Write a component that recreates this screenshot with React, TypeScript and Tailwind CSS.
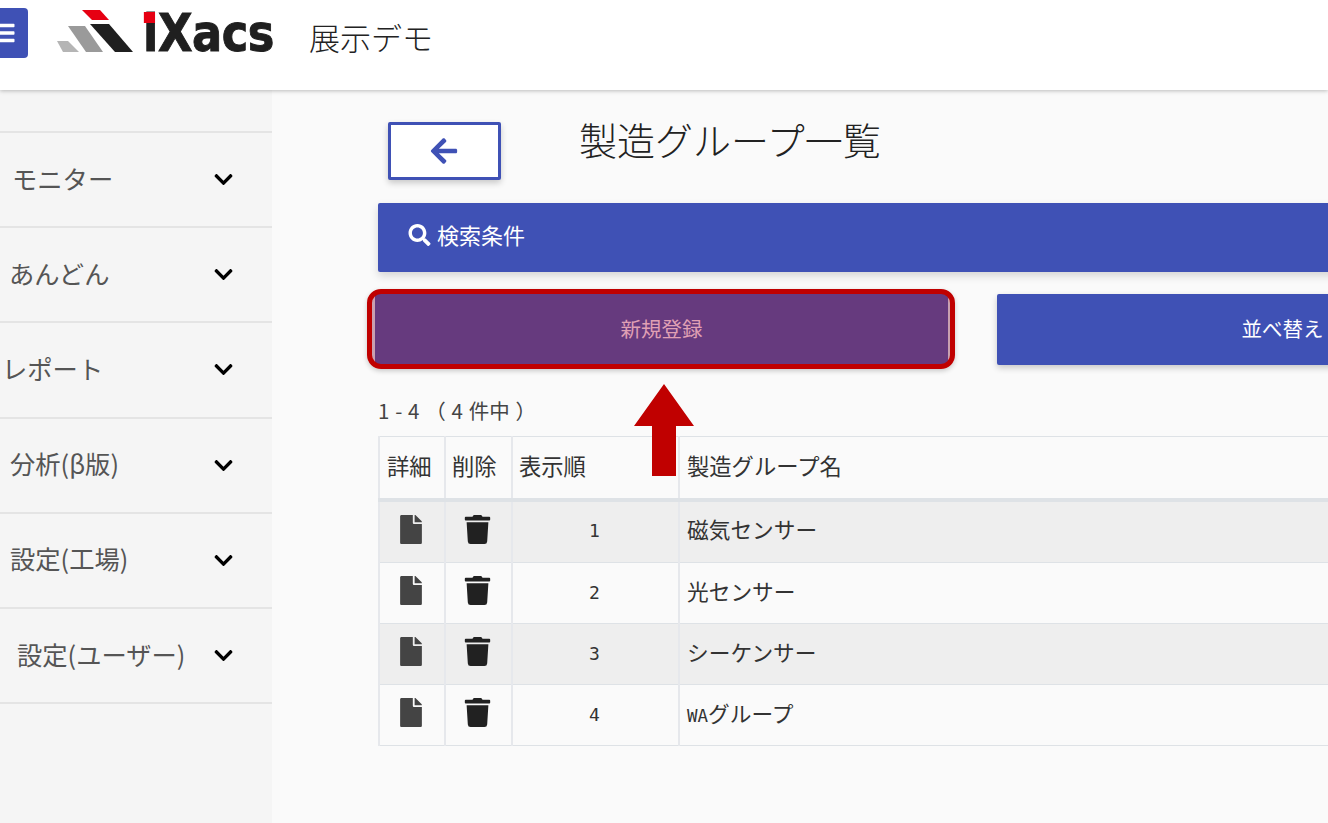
import { FaArrowLeft, FaBars, FaChevronDown, FaFile, FaSearch, FaTrash } from 'react-icons/fa';

const fontStack = { fontFamily: '"Noto Sans CJK JP", "Noto Sans", sans-serif' };

const menuItems = [
    { label: 'モニター', pad: 'pl-[12px]' },
    { label: 'あんどん', pad: 'pl-[9px]' },
    { label: 'レポート', pad: 'pl-[2px]' },
    { label: '分析(β版)', pad: 'pl-[10px]' },
    { label: '設定(工場)', pad: 'pl-[10px]' },
    { label: '設定(ユーザー)', pad: 'pl-[17px]' },
];

const rows = [
    { order: 1, prefix: '', name: '磁気センサー' },
    { order: 2, prefix: '', name: '光センサー' },
    { order: 3, prefix: '', name: 'シーケンサー' },
    { order: 4, prefix: 'WA', name: 'グループ' },
];

function Logo() {
    return (
        <div className="flex items-center">
            <svg width="78" height="44" viewBox="0 0 78 44">
                <polygon points="25,1 43,1 52,11 35,11" fill="#e60012" />
                <polygon points="33,15 52,15 76,43 58,43" fill="#1f1f1f" />
                <polygon points="11,17 28,17 46,43 29,43" fill="#9a9a9a" />
                <polygon points="0,32 11,32 22,43 6,43" fill="#b5b5b5" />
            </svg>
            <div className="relative ml-[8px] w-[130px] origin-left translate-y-[2px] scale-x-[0.86] text-[52px] leading-none font-bold tracking-[-0.5px] text-[#1f1f1f] [-webkit-text-stroke:1px_#1f1f1f] [font-family:'DejaVu_Sans',sans-serif]">
                iXacs
                <span className="absolute left-[1px] top-[5px] h-[11px] w-[13px] bg-[#e60012]" />
            </div>
        </div>
    );
}

function SideMenu() {
    return (
        <aside className="w-[272px] shrink-0 bg-[#f5f5f5] pt-[41px]">
            <div className="border-t-2 border-[#e4e4e4]">
                {menuItems.map((item) => (
                    <div
                        key={item.label}
                        className={`flex h-[95.2px] items-center justify-between border-b-2 border-[#e4e4e4] pr-[38px] ${item.pad}`}
                    >
                        <span className="pb-[2px] text-[25.3px] text-[#555]">{item.label}</span>
                        <FaChevronDown className="h-[21px] w-[21px] text-black" />
                    </div>
                ))}
            </div>
        </aside>
    );
}

function GroupTable() {
    return (
        <table className="w-[1000px] table-fixed border-collapse border border-[#dee2e6] text-[21.7px] text-[#333]">
            <colgroup>
                <col className="w-[66px]" />
                <col className="w-[67px]" />
                <col className="w-[167px]" />
                <col />
            </colgroup>
            <thead>
                <tr className="h-[63px] border-b-[4px] border-[#dee2e6] text-[22.3px]">
                    <th className="border-x-2 border-[#e6e8ec] px-[7px] pb-[3px] text-left font-normal">詳細</th>
                    <th className="border-x-2 border-[#e6e8ec] px-[6px] pb-[3px] text-left font-normal">削除</th>
                    <th className="border-x-2 border-[#e6e8ec] px-[6px] pb-[3px] text-left font-normal">表示順</th>
                    <th className="border-x-2 border-[#e6e8ec] px-[7px] pb-[3px] text-left font-normal">製造グループ名</th>
                </tr>
            </thead>
            <tbody>
                {rows.map((row, index) => (
                    <tr
                        key={row.order}
                        className={`border-b border-[#dee2e6] ${index === 0 ? 'h-[63px]' : 'h-[61px]'} ${index % 2 === 0 ? 'bg-[#eeeeee]' : 'bg-[#fafafa]'}`}
                    >
                        <td className="border-x-2 border-[#e6e8ec] pb-[5px] pr-[2px]">
                            <FaFile className="mx-auto h-[29px] w-[24px] text-[#444]" />
                        </td>
                        <td className="border-x-2 border-[#e6e8ec] pb-[5px] pr-[2px]">
                            <FaTrash className="mx-auto h-[29px] w-[27px] text-[#212121]" />
                        </td>
                        <td className="border-x-2 border-[#e6e8ec] pb-[2px] pr-[2px] text-center text-[18px] [font-family:'DejaVu_Sans_Mono',monospace]">{row.order}</td>
                        <td className="border-x-2 border-[#e6e8ec] px-[7px] pb-[4px]">
                            {row.prefix && <span className="text-[17.5px] [font-family:'DejaVu_Sans_Mono',monospace]">{row.prefix}</span>}
                            {row.name}
                        </td>
                    </tr>
                ))}
            </tbody>
        </table>
    );
}

export default function App() {
    return (
        <div className="h-[823px] w-[1328px] overflow-hidden bg-[#fafafa]" style={fontStack}>
            <header className="relative z-10 flex h-[90px] items-center bg-white shadow-[0_1px_4px_rgba(0,0,0,0.25)]">
                <div className="-ml-[20px] mb-[24px] flex h-[50px] w-[48px] shrink-0 items-center justify-center rounded-[4px] bg-[#3f51b5]">
                    <FaBars className="h-[24px] w-[24px] text-white" />
                </div>
                <div className="mb-[28px] ml-[29px]">
                    <Logo />
                </div>
                <span className="mb-[16px] ml-[36px] text-[31px] font-light text-[#222]">展示デモ</span>
            </header>

            <div className="flex h-[733px]">
                <SideMenu />
                <main className="relative min-w-0 flex-1 pl-[106px]">
                    <div className="flex pt-[32px]">
                        <button className="ml-[10px] flex h-[58px] w-[113px] items-center justify-center rounded-[2px] border-[3px] border-[#3f51b5] bg-white shadow-[0_3px_6px_rgba(0,0,0,0.2)]">
                            <FaArrowLeft className="-ml-[2px] h-[30px] w-[30px] text-[#3f51b5]" />
                        </button>
                        <h1 className="ml-[78px] -mt-[5px] text-[38px] leading-[44px] font-light text-[#222]">製造グループ一覧</h1>
                    </div>

                    <div className="mt-[23px] flex h-[69px] w-[1000px] items-center rounded-[2px] bg-[#3f51b5] pb-[6px] pl-[30px] text-[22px] text-white shadow-[0_4px_8px_rgba(0,0,0,0.15)]">
                        <FaSearch className="mr-[6px] h-[22px] w-[23px]" />
                        検索条件
                    </div>

                    <div className="mt-[22px] flex gap-[46px]">
                        <button className="-ml-[6px] flex h-[71px] w-[579px] shrink-0 items-center justify-center rounded-[2px] border-x-[3px] border-[#c9a0b0] bg-[#663a7e] pb-[2px] text-[20.5px] text-[#e0a0b4]">
                            新規登録
                        </button>
                        <button className="flex h-[71px] w-[571px] shrink-0 items-center justify-center rounded-[2px] bg-[#3f51b5] pb-[2px] text-[20.5px] text-white shadow-[0_3px_6px_rgba(0,0,0,0.2)]">
                            並べ替え
                        </button>
                    </div>

                    <p className="mt-[31px] text-[20.5px] leading-[28px] text-[#444] [word-spacing:1.2px]">1 - 4 （ 4 件中 ）</p>
                    <div className="mt-[12px]">
                        <GroupTable />
                    </div>

                    {/* callout over the new-registration button */}
                    <div className="absolute left-[95px] top-[199px] h-[80px] w-[588px] rounded-[14px] border-[5px] border-[#c00000] shadow-[0_2px_5px_rgba(0,0,0,0.2)]" />
                    <svg className="absolute left-[362px] top-[293px]" width="60" height="96" viewBox="0 0 60 96">
                        <polygon points="30,1 60,43 42,43 42,93 18,93 18,43 0,43" fill="#c00000" />
                    </svg>
                </main>
            </div>
        </div>
    );
}
